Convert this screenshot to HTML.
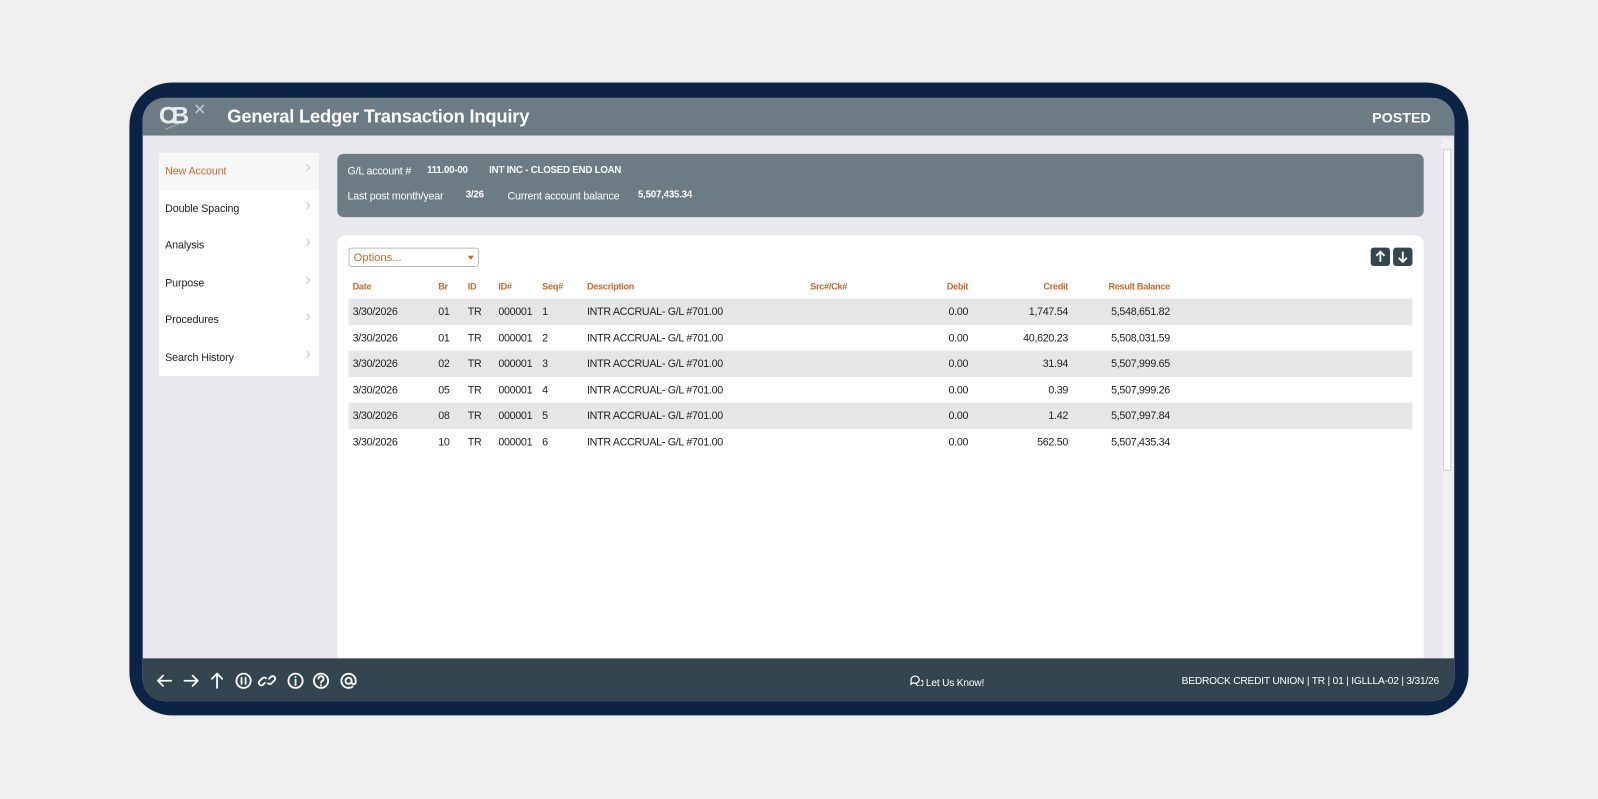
<!DOCTYPE html>
<html><head><meta charset="utf-8"><style>
*{box-sizing:border-box;margin:0;padding:0}
body{width:1598px;height:799px;background:#f0efed;font-family:"Liberation Sans",Arial,sans-serif;position:relative;overflow:hidden}
#w{position:absolute;left:0;top:0;width:1568px;height:784px;transform:scale(1.0191);transform-origin:0 0}
.frame{position:absolute;left:127px;top:81px;width:1314px;height:621px;background:#0b2345;border-radius:42px}
.screen{position:absolute;left:140px;top:96px;width:1287px;height:592px;background:#e8e8ee;border-radius:22px;overflow:hidden}
.hdr{position:absolute;left:0;top:0;width:100%;height:37px;background:#6c7c84}
.title{position:absolute;left:83px;top:8px;color:#fff;font-size:18px;font-weight:bold;letter-spacing:-0.2px}
.posted{position:absolute;right:23px;top:11px;color:#fff;font-size:14px;font-weight:bold}
.side{position:absolute;left:16px;top:54px;width:157px;background:#fff}
.side div{height:36.5px;line-height:36.5px;padding-left:6px;font-size:10.5px;color:#222;position:relative;letter-spacing:-0.1px}
.side div:after{content:"›";position:absolute;right:8px;top:-3px;color:#ccc;font-size:16px}
.side div.a{color:#c8692a;background:#f7f7f7}
.info{position:absolute;left:191px;top:55px;width:1066px;height:62px;background:#6c7c84;border-radius:6px;color:#fff;font-size:10.5px;letter-spacing:-0.2px}
.info span{position:absolute}
.info b{position:absolute;font-size:9.5px}
.panel{position:absolute;left:191px;top:135px;width:1066px;height:420px;background:#fff;border-radius:8px}
.opt{position:absolute;left:11px;top:12px;width:128px;height:19px;border:1px solid #bbb;border-radius:3px;color:#c8692a;font-size:11px;padding:3px 4px}
.opt:after{content:"";position:absolute;right:4px;top:7px;border:3px solid transparent;border-top:4px solid #c8692a}
.btn{position:absolute;top:12px;width:19px;height:18px;background:#33464f;border-radius:3px}
.row{position:absolute;left:11px;width:1044px;height:25.5px;font-size:10.5px;color:#222;letter-spacing:-0.3px}
.row.g{background:#e6e6e6}
.row span{position:absolute;top:7px}
.th span{color:#c8692a;font-weight:bold;font-size:9px;top:3px}
.r{text-align:right}
.foot{position:absolute;left:0;top:550px;width:100%;height:42px;background:#33464f;color:#fff}
.scroll{position:absolute;left:1275px;top:40px;width:10px;height:510px;background:#f0f0f0}
.thumb{position:absolute;left:1276px;top:50px;width:8px;height:316px;background:#fff;border:1px solid #ccc}
</style></head><body>
<div id="w">
<div class="frame"></div>
<div class="screen">
 <div class="hdr">
  <svg style="position:absolute;left:14px;top:1px" width="52" height="32" viewBox="0 0 52 32"><text x="2" y="24" font-family="Liberation Sans" font-weight="bold" font-size="24" fill="#e8ecee" letter-spacing="-5">CB</text><path d="M38 6l8 8M46 6l-8 8" stroke="#c5ccd0" stroke-width="1.5"/><path d="M8 30l14-6" stroke="#a8b2b8" stroke-width="1"/></svg>
  <div class="title">General Ledger Transaction Inquiry</div><div class="posted">POSTED</div></div>
 <div class="side"><div class="a">New Account</div><div>Double Spacing</div><div>Analysis</div><div>Purpose</div><div>Procedures</div><div>Search History</div></div>
 <div class="info">
  <span style="left:10px;top:11px">G/L account #</span><b style="left:88px;top:11px">111.00-00</b><b style="left:149px;top:11px">INT INC - CLOSED END LOAN</b>
  <span style="left:10px;top:36px">Last post month/year</span><b style="left:126px;top:35px">3/26</b><span style="left:167px;top:36px">Current account balance</span><b style="left:295px;top:35px">5,507,435.34</b>
 </div>
 <div class="panel">
  <div class="opt">Options...</div>
  <div class="btn" style="left:1014px"><svg width="19" height="18"><path d="M9.5 4v10M5.5 8l4-4 4 4" stroke="#fff" stroke-width="1.8" fill="none"/></svg></div>
  <div class="btn" style="left:1036px"><svg width="19" height="18"><path d="M9.5 4v10M5.5 10l4 4 4-4" stroke="#fff" stroke-width="1.8" fill="none"/></svg></div>
  <div class="row th" style="top:42px"><span style="left:4px">Date</span><span style="left:88px">Br</span><span style="left:117px">ID</span><span style="left:147px">ID#</span><span style="left:190px">Seq#</span><span style="left:234px">Description</span><span style="left:453px">Src#/Ck#</span><span class="r" style="right:436px">Debit</span><span class="r" style="right:338px">Credit</span><span class="r" style="right:238px">Result Balance</span></div>
 </div>
 <div class="scroll"></div><div class="thumb"></div>
 <div class="foot">
  <svg style="position:absolute;left:12px;top:12px" width="215" height="20" viewBox="0 0 215 20" fill="none" stroke="#fff" stroke-width="1.8" stroke-linecap="round" stroke-linejoin="round">
   <path d="M3 10h13M8 5l-5 5 5 5"/>
   <path d="M29 10h13M37 5l5 5-5 5"/>
   <path d="M61 17V3M56 8l5-5 5 5"/>
   <circle cx="87" cy="10" r="7"/><path d="M85 7v6M89 7v6"/>
   <path d="M108 12l-2 2a2.5 2.5 0 0 1-3.5-3.5l3-3a2.5 2.5 0 0 1 3.5 0M112 8l2-2a2.5 2.5 0 0 1 3.5 3.5l-3 3a2.5 2.5 0 0 1-3.5 0"/>
   <circle cx="138" cy="10" r="7"/><path d="M138 9v5M138 6.3v.2"/>
   <circle cx="163" cy="10" r="7"/><path d="M160.5 8a2.5 2.5 0 1 1 3.5 2.3c-.8.4-1 .9-1 1.7M163 14.5v.2"/>
   <path d="M193 10a3 3 0 1 1-6 0 3 3 0 0 1 6 0zM193 10v1.5a2 2 0 0 0 4 0V10a7 7 0 1 0-3 5.8"/>
  </svg>
  <div style="position:absolute;left:753px;top:16px;font-size:10px;letter-spacing:-0.2px"><svg width="13" height="11" viewBox="0 0 13 11" fill="none" stroke="#fff" stroke-width="1.2"><path d="M1 5a4 3.5 0 1 1 2 3l-2 1.5z"/><path d="M6 8a3.5 3 0 1 0 5-2.5"/></svg> Let Us Know!</div>
  <div style="position:absolute;right:15px;top:17px;font-size:10px;letter-spacing:-0.2px">BEDROCK CREDIT UNION | TR | 01 | IGLLLA-02 | 3/31/26</div>
 </div>
</div>
</div>
<script>
var d=[["01","1","1,747.54","5,548,651.82"],["01","2","40,620.23","5,508,031.59"],["02","3","31.94","5,507,999.65"],["05","4","0.39","5,507,999.26"],["08","5","1.42","5,507,997.84"],["10","6","562.50","5,507,435.34"]];
var p=document.querySelector('.panel');
d.forEach(function(r,i){var e=document.createElement('div');e.className='row'+(i%2?'':' g');e.style.top=(62+i*25.5)+'px';
e.innerHTML='<span style="left:4px">3/30/2026</span><span style="left:88px">'+r[0]+'</span><span style="left:117px">TR</span><span style="left:147px">000001</span><span style="left:190px">'+r[1]+'</span><span style="left:234px">INTR ACCRUAL- G/L #701.00</span><span class="r" style="right:436px">0.00</span><span class="r" style="right:338px">'+r[2]+'</span><span class="r" style="right:238px">'+r[3]+'</span>';p.appendChild(e);});
</script>
</body></html>
